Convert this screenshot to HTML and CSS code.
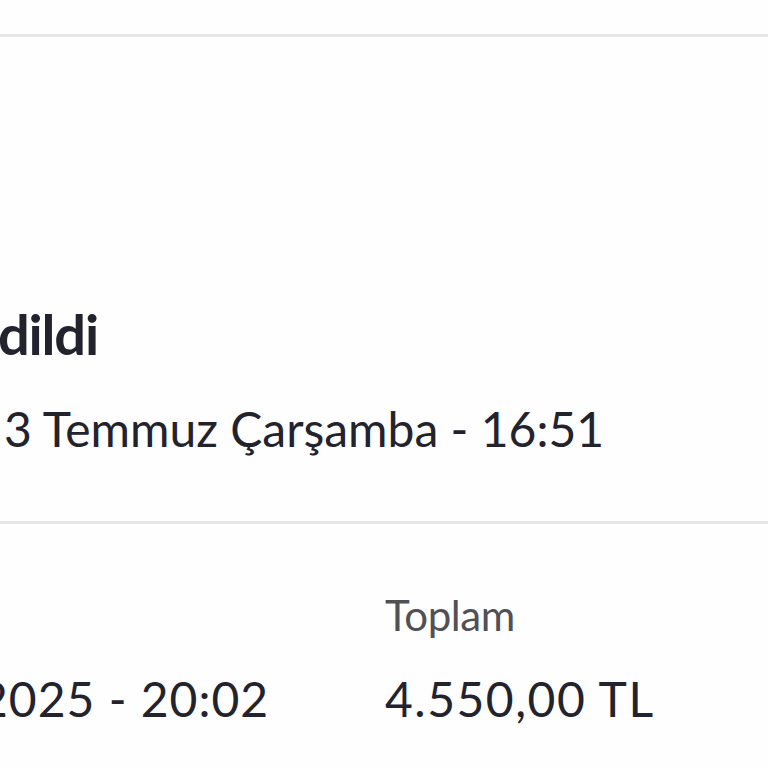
FILE: index.html
```html
<!DOCTYPE html>
<html lang="tr">
<head>
<meta charset="utf-8">
<link rel="stylesheet" href="styles.css">
</head>
<body>
<div class="page">
  <div class="top-gap"></div>
  <section class="status">
    <h1 class="title">dildi</h1>
    <p class="date">3 Temmuz Çarşamba - 16:51</p>
  </section>
  <section class="summary">
    <div class="col col-left">
      <div class="label">&nbsp;</div>
      <div class="value value-left">2025 - 20:02</div>
    </div>
    <div class="col col-right">
      <div class="label">Toplam</div>
      <div class="value">4.550,00 TL</div>
    </div>
  </section>
</div>
</body>
</html>
```

FILE: styles.css
```css
html, body {
  margin: 0;
  padding: 0;
  background: #fefefe;
}
body {
  width: 768px;
  height: 768px;
  overflow: hidden;
  font-family: "Lato", "Noto Sans", sans-serif;
  color: #23232e;
}
.page {
  display: flex;
  flex-direction: column;
}
.top-gap {
  height: 34px;
  border-bottom: 3px solid #e6e6e6;
}
.status {
  height: 487px;
  border-bottom: 3px solid #e6e6e6;
  display: flex;
  flex-direction: column;
  justify-content: flex-end;
  padding-bottom: 68px;
  box-sizing: border-box;
}
.title {
  margin: 0;
  font-size: 56px;
  font-weight: 700;
  line-height: 1;
  margin-left: -2px;
  letter-spacing: -1.2px;
}
.date {
  margin: 43px 0 0 4px;
  font-size: 48px;
  font-weight: 400;
  line-height: 1;
}
.summary {
  display: flex;
  padding-top: 70px;
}
.col {
  display: flex;
  flex-direction: column;
  gap: 39px;
}
.col-left {
  width: 385px;
  overflow: hidden;
}
.label {
  font-size: 42px;
  color: #505055;
  line-height: 1;
  letter-spacing: -0.4px;
}
.value {
  font-size: 48px;
  line-height: 1;
  white-space: nowrap;
  letter-spacing: 1.5px;
}
.value-left {
  margin-left: -20px;
  letter-spacing: 1px;
}
```
